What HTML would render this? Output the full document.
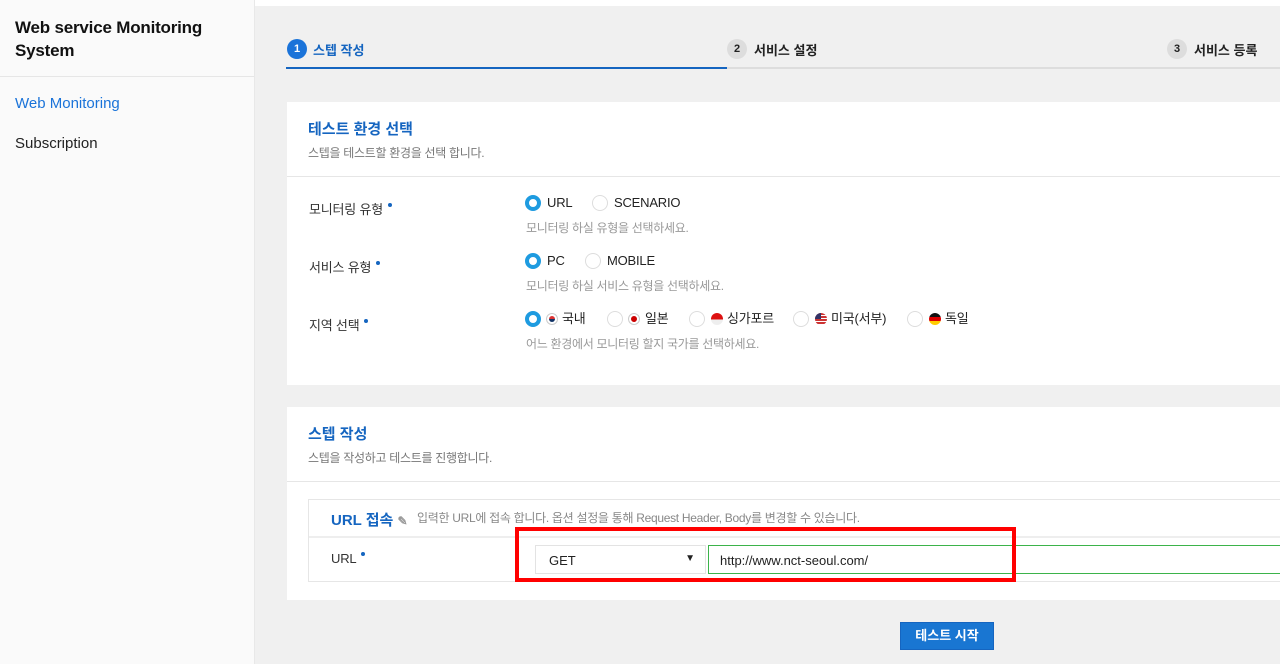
<!DOCTYPE html>
<html><head><meta charset="utf-8"><style>
*{margin:0;padding:0;box-sizing:border-box}
body{width:1280px;height:664px;overflow:hidden;background:#fff;font-family:"Liberation Sans","Noto Sans CJK KR",sans-serif;position:relative;color:#222}
.a{position:absolute;white-space:nowrap}
#side{left:0;top:0;width:255px;height:664px;background:#fafafa;border-right:1px solid #e8e8e8}
#main{left:255px;top:6px;width:1025px;height:658px;background:#f0f0f0}
.card{position:absolute;background:#fff;left:287px;width:993px}
.circ{position:absolute;width:20px;height:20px;border-radius:50%;font-size:11px;font-weight:bold;text-align:center;line-height:20px}
.rad{position:absolute;width:16px;height:16px;border-radius:50%;border:1px solid #ddd;background:#fff}
.rad.on{border:4px solid #1e9be0}
.t13{font-size:13px;letter-spacing:-0.2px;line-height:16px}
.help{font-size:12px;color:#999;letter-spacing:-0.3px;line-height:16px}
.lbl{font-size:13px;color:#333;letter-spacing:-0.2px;line-height:16px}
.dot{display:inline-block;width:4px;height:4px;border-radius:50%;background:#1565c0;vertical-align:top;margin-left:5px;margin-top:1px}
.flag{position:absolute;width:12px;height:12px;border-radius:50%;overflow:hidden}
</style></head><body>
<div id="side" class="a"></div>
<div class="a" style="left:15px;top:16px;font-size:17px;font-weight:bold;line-height:23px;color:#111;letter-spacing:-0.2px">Web service Monitoring<br>System</div>
<div class="a" style="left:0;top:76px;width:254px;height:1px;background:#e6e6e6"></div>
<div class="a" style="left:15px;top:95px;font-size:15px;color:#1a73d9">Web Monitoring</div>
<div class="a" style="left:15px;top:135px;font-size:15px;color:#222">Subscription</div>
<div id="main" class="a"></div>

<div class="circ" style="left:287px;top:39px;background:#1a73d9;color:#fff">1</div>
<div class="a" style="left:313px;top:40px;font-size:13px;font-weight:bold;color:#1565c0">스텝 작성</div>
<div class="circ" style="left:727px;top:39px;background:#ddd;color:#222">2</div>
<div class="a" style="left:754px;top:40px;font-size:13px;font-weight:bold;color:#222">서비스 설정</div>
<div class="circ" style="left:1167px;top:39px;background:#ddd;color:#222">3</div>
<div class="a" style="left:1194px;top:40px;font-size:13px;font-weight:bold;color:#222">서비스 등록</div>
<div class="a" style="left:286px;top:67px;width:441px;height:2px;background:#1565c0"></div>
<div class="a" style="left:727px;top:67px;width:553px;height:2px;background:#ddd"></div>

<div class="card" style="top:102px;height:283px">
<div class="a" style="left:21px;top:16px;font-size:15px;font-weight:bold;color:#1565c0">테스트 환경 선택</div>
<div class="a" style="left:21px;top:42px;font-size:12px;color:#777;letter-spacing:-0.3px">스텝을 테스트할 환경을 선택 합니다.</div>
<div class="a" style="left:0;top:74px;width:993px;height:1px;background:#e6e6e6"></div>

<div class="a lbl" style="left:22px;top:100px">모니터링 유형<span class="dot"></span></div>
<div class="rad on" style="left:238px;top:93px"></div><div class="a t13" style="left:260px;top:93px">URL</div>
<div class="rad" style="left:305px;top:93px"></div><div class="a t13" style="left:327px;top:93px">SCENARIO</div>
<div class="a help" style="left:239px;top:118px">모니터링 하실 유형을 선택하세요.</div>

<div class="a lbl" style="left:22px;top:158px">서비스 유형<span class="dot"></span></div>
<div class="rad on" style="left:238px;top:151px"></div><div class="a t13" style="left:260px;top:151px">PC</div>
<div class="rad" style="left:298px;top:151px"></div><div class="a t13" style="left:320px;top:151px">MOBILE</div>
<div class="a help" style="left:239px;top:176px">모니터링 하실 서비스 유형을 선택하세요.</div>

<div class="a lbl" style="left:22px;top:216px">지역 선택<span class="dot"></span></div>
<div class="rad on" style="left:238px;top:209px"></div>
<div class="flag" style="left:259px;top:211px;background:#fff;border:1px solid #ccc"></div>
<div class="a" style="left:262px;top:214px;width:6px;height:6px;border-radius:50%;background:linear-gradient(#d33 50%,#136 50%)"></div>
<div class="a t13" style="left:275px;top:209px">국내</div>
<div class="rad" style="left:320px;top:209px"></div>
<div class="flag" style="left:341px;top:211px;background:#fff;border:1px solid #ccc"></div>
<div class="a" style="left:344px;top:214px;width:6px;height:6px;border-radius:50%;background:#c00"></div>
<div class="a t13" style="left:358px;top:209px">일본</div>
<div class="rad" style="left:402px;top:209px"></div>
<div class="flag" style="left:424px;top:211px;background:linear-gradient(#d11 55%,#eee 55%)"></div>
<div class="a t13" style="left:440px;top:209px">싱가포르</div>
<div class="rad" style="left:506px;top:209px"></div>
<div class="flag" style="left:528px;top:211px;background:repeating-linear-gradient(#c33 0 2px,#fff 2px 3px)"></div>
<div class="a" style="left:528px;top:211px;width:6px;height:6px;background:#336;border-top-left-radius:6px"></div>
<div class="a t13" style="left:544px;top:209px">미국(서부)</div>
<div class="rad" style="left:620px;top:209px"></div>
<div class="flag" style="left:642px;top:211px;background:linear-gradient(#111 33%,#d00 33% 66%,#fc0 66%)"></div>
<div class="a t13" style="left:658px;top:209px">독일</div>
<div class="a help" style="left:239px;top:234px">어느 환경에서 모니터링 할지 국가를 선택하세요.</div>
</div>

<div class="card" style="top:407px;height:193px">
<div class="a" style="left:21px;top:16px;font-size:15px;font-weight:bold;color:#1565c0">스텝 작성</div>
<div class="a" style="left:21px;top:42px;font-size:12px;color:#777;letter-spacing:-0.3px">스텝을 작성하고 테스트를 진행합니다.</div>
<div class="a" style="left:0;top:74px;width:993px;height:1px;background:#e6e6e6"></div>
<div class="a" style="left:21px;top:92px;width:972px;height:83px;border:1px solid #e6e6e6;border-right:none">
 <div class="a" style="left:22px;top:9px;font-size:15px;font-weight:bold;color:#1565c0">URL 접속 <span style="color:#999;font-size:12px">✎</span></div>
 <div class="a" style="left:108px;top:9px;font-size:12px;color:#888;letter-spacing:-0.3px">입력한 URL에 접속 합니다. 옵션 설정을 통해 Request Header, Body를 변경할 수 있습니다.</div>
 <div class="a" style="left:0;top:36px;width:972px;height:2px;background:#eee"></div>
 <div class="a lbl" style="left:22px;top:51px">URL<span class="dot"></span></div>
 <div class="a" style="left:226px;top:45px;width:171px;height:29px;border:1px solid #e3e3e3;font-size:13px;padding:7px 13px">GET<span style="position:absolute;right:10px;top:7px;font-size:10px">▼</span></div>
 <div class="a" style="left:399px;top:45px;width:575px;height:29px;border:1px solid #3bb34a;font-size:13px;padding:7px 11px">http://www.nct-seoul.com/</div>
</div>
</div>
<div class="a" style="left:515px;top:527px;width:501px;height:55px;border:4px solid #f00"></div>
<div class="a" style="left:900px;top:622px;width:94px;height:28px;background:#1976d2;border:1px solid #1565c0;color:#fff;font-size:13px;font-weight:bold;text-align:center;line-height:26px">테스트 시작</div>
</body></html>
